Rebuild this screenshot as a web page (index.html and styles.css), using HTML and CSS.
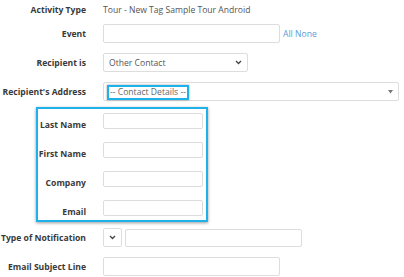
FILE: index.html
```html
<!DOCTYPE html>
<html lang="en">
<head>
    <meta charset="UTF-8">
    <meta name="viewport" content="width=device-width, initial-scale=1.0">
    <title>Notification</title>
    <link rel="stylesheet" href="styles.css">
</head>
<body>
    <div class="form">
        <div class="row row-top">
            <div class="label">Activity Type</div>
            <div class="value">Tour - New Tag Sample Tour Android</div>
        </div>

        <div class="row">
            <label class="label" for="event">Event</label>
            <input class="input w-wide" id="event" type="text">
            <span class="links"><a href="#">All</a> <a href="#">None</a></span>
        </div>

        <div class="row">
            <div class="label">Recipient is</div>
            <div class="select w-recipient">
                <span>Other Contact</span>
                <svg class="chevron" width="7" height="5" viewBox="0 0 7 5"><path d="M1 1 L3.5 3.5 L6 1" fill="none" stroke="#444" stroke-width="1.3"/></svg>
            </div>
        </div>

        <div class="row">
            <div class="label">Recipient's Address</div>
            <div class="select w-address">
                <span class="picked">-- Contact Details --</span>
                <svg class="caret" width="5" height="4" viewBox="0 0 5 4"><path d="M0 0 H5 L2.5 3.5 Z" fill="#777"/></svg>
            </div>
        </div>

        <div class="group">
            <div class="row">
                <label class="label" for="lastName">Last Name</label>
                <input class="input w-small" id="lastName" type="text">
            </div>
            <div class="row">
                <label class="label" for="firstName">First Name</label>
                <input class="input w-small" id="firstName" type="text">
            </div>
            <div class="row">
                <label class="label" for="company">Company</label>
                <input class="input w-small" id="company" type="text">
            </div>
            <div class="row">
                <label class="label" for="email">Email</label>
                <input class="input w-small" id="email" type="text">
            </div>
        </div>

        <div class="row">
            <div class="label">Type of Notification</div>
            <div class="select w-tiny">
                <svg class="chevron" width="7" height="5" viewBox="0 0 7 5"><path d="M1 1 L3.5 3.5 L6 1" fill="none" stroke="#444" stroke-width="1.3"/></svg>
            </div>
            <input class="input w-notify" type="text">
        </div>

        <div class="row">
            <label class="label" for="subject">Email Subject Line</label>
            <input class="input w-wide" id="subject" type="text">
        </div>
    </div>
</body>
</html>
```

FILE: styles.css
```css
* {
    box-sizing: border-box;
}

body {
    font-family: "Open Sans", Arial, sans-serif;
    font-size: 8.6px;
    color: #333;
    margin: 0;
    padding: 0;
    background: white;
}

.row {
    display: flex;
    align-items: center;
    height: 29px;
}

.row-top {
    height: 19px;
}

.label {
    width: 86px;
    flex-shrink: 0;
    margin-right: 17px;
    text-align: right;
    white-space: nowrap;
    font-weight: 700;
    color: #3a3a3a;
}

.value {
    color: #555;
}

.input,
.select {
    height: 19px;
    border: 1px solid #ddd;
    border-radius: 2px;
    background: white;
    margin: 0;
    padding: 0 5px;
    font: inherit;
}

.select {
    display: flex;
    align-items: center;
    justify-content: space-between;
    color: #555;
}

.w-wide {
    width: 177px;
}

.w-recipient {
    width: 145px;
}

.w-address {
    width: 296px;
}

.w-small {
    width: 100px;
    height: 16px;
    margin-bottom: 7px;
}

.w-tiny {
    width: 19px;
    padding: 0;
    justify-content: center;
}

.w-notify {
    width: 177px;
    height: 18px;
    margin-left: 3px;
}

.links {
    margin-left: 3px;
}

.links a {
    color: #5b9bd5;
    text-decoration: none;
}

.picked {
    margin: 1px 0 0 -2px;
    padding: 0 1px;
    line-height: 11px;
    border: 2px solid #1eb1ea;
    box-shadow: 0 0 2px rgba(0, 0, 0, 0.4);
    color: #666;
}

.group {
    width: 172px;
    height: 115px;
    margin: 1px 0 1px 36px;
    padding-top: 1px;
    border: 2px solid #1eb1ea;
    box-shadow: 0 1px 3px rgba(0, 0, 0, 0.4);
}

.group .label {
    width: 48px;
}
```
